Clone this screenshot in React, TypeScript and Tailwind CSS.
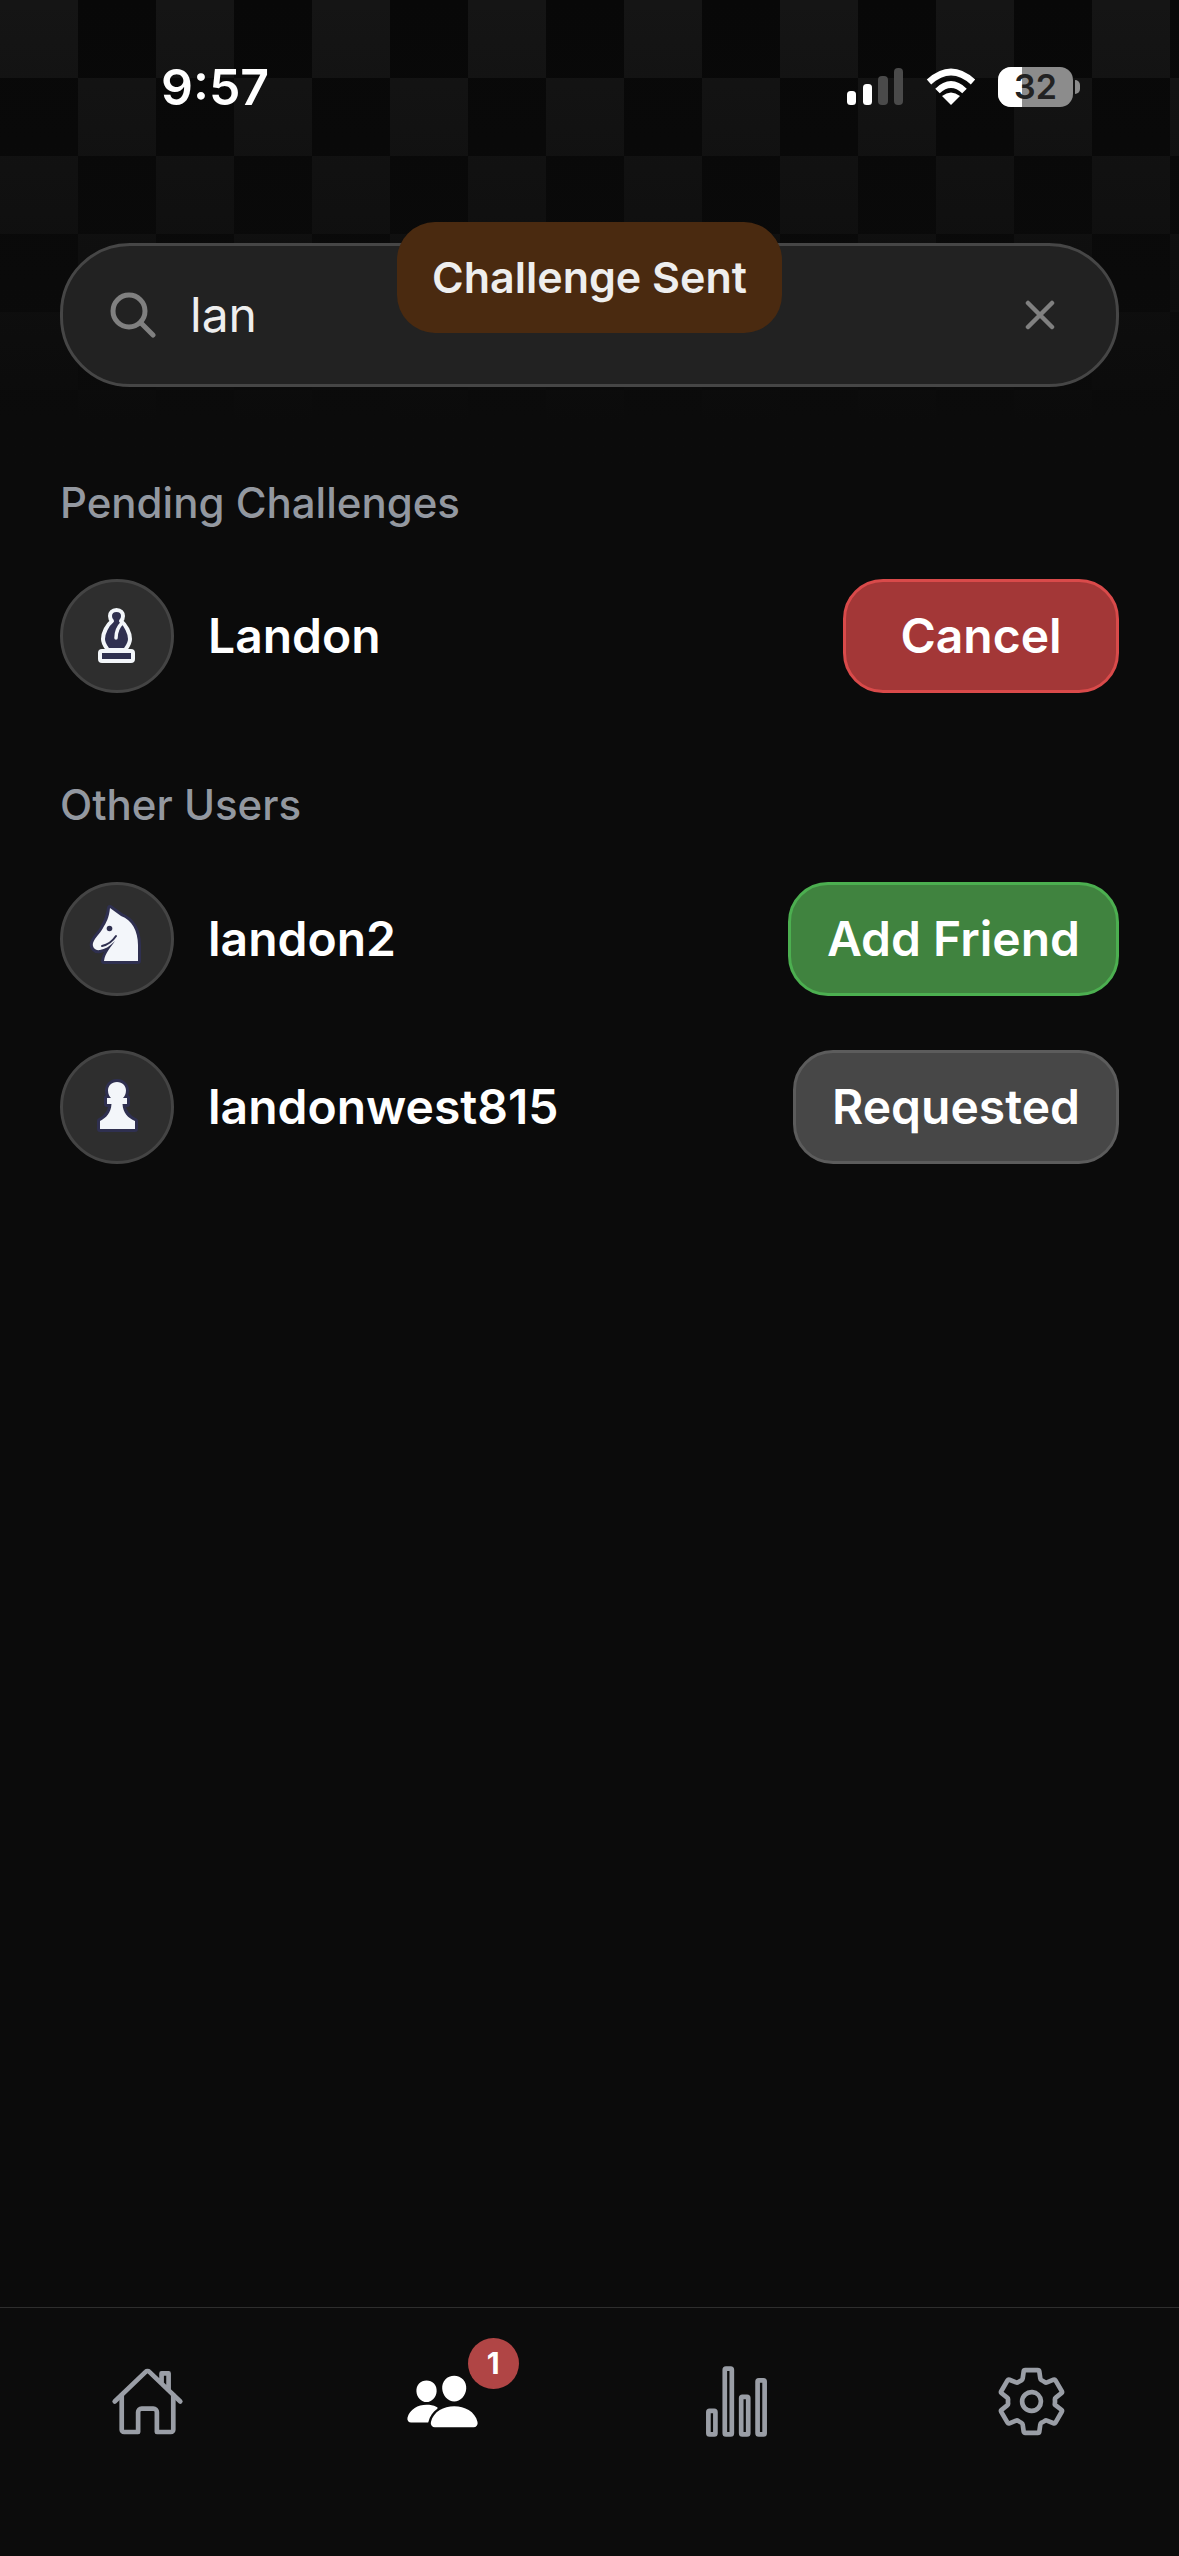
import React from "react";
import {
  IoHomeOutline,
  IoPeople,
  IoSettingsOutline,
  IoStatsChartOutline,
} from "react-icons/io5";

const BishopIcon = () => (
  <svg width="54" height="72" viewBox="0 0 54 72">
    <g fill="#2f3050" stroke="#f3f6fa" strokeWidth="4" strokeLinejoin="round">
      <path d="M26.500 10C31 10 33 13 33 16C33 18 32 20 31 21C36 25 40 33 40 39C40 44 37 47 35 50H18C16 47 13 44 13 39C13 33 17 25 22 21C21 20 20 18 20 16C20 13 22 10 26.500 10Z" />
      <rect x="10" y="51" width="33" height="10" rx="2" />
    </g>
    <path d="M32 23C29 26 26 31 26 38" fill="none" stroke="#f3f6fa" strokeWidth="3.500" strokeLinecap="round" />
  </svg>
);

const KnightIcon = () => (
  <svg width="64" height="72" viewBox="0 0 64 72">
    <path
      d="M25 5L36 13C47 17 53 28 53 42V58H19C20 50 26 44 30 38C24 44 20 46 15 47C10 48 7 44 8 40C10 34 15 31 18 25C21 20 24 15 25 5Z"
      fill="#f3f6fa"
      stroke="#2f3050"
      strokeWidth="6"
      strokeLinejoin="round"
      paintOrder="stroke"
    />
    <circle cx="24.500" cy="25.500" r="2.800" fill="#2f3050" />
    <path d="M31 33C27 39 22 42 17 43" fill="none" stroke="#2f3050" strokeWidth="2" strokeLinecap="round" />
  </svg>
);

const PawnIcon = () => (
  <svg width="64" height="72" viewBox="0 0 64 72">
    <path
      d="M32 11C26.500 11 23 15 23 19.500C23 23 24.500 25.500 26 27H22V33H26.500C26 42 21 47 15 50V58H50V50C43 47 38 42 37.500 33H42V27H38C39.500 25.500 41 23 41 19.500C41 15 37.500 11 32 11Z"
      fill="#f3f6fa"
      stroke="#2f3050"
      strokeWidth="6"
      strokeLinejoin="round"
      paintOrder="stroke"
    />
  </svg>
);

const SignalIcon = () => (
  <svg width="58" height="38" viewBox="0 0 58 38">
    <rect x="1" y="23" width="9" height="14" rx="3.500" fill="#fff" />
    <rect x="17" y="16" width="9" height="21" rx="3.500" fill="#fff" />
    <rect x="32" y="8" width="10" height="29" rx="4" fill="#4a4a4a" />
    <rect x="48" y="0" width="9" height="37" rx="4" fill="#4a4a4a" />
  </svg>
);

const WifiIcon = () => (
  <svg width="50" height="38" viewBox="0 0 50 38">
    <path d="M3 14Q25 -6 47 14" fill="none" stroke="#fff" strokeWidth="6.500" strokeLinecap="butt" />
    <path d="M11.500 23Q25 10 38.500 23" fill="none" stroke="#fff" strokeWidth="6.500" />
    <path d="M25 37L16 28Q25 21 34 28Z" fill="#fff" />
  </svg>
);

const Battery = () => (
  <div className="flex items-center gap-[2px]">
    <div className="relative h-[40px] w-[75px] overflow-hidden rounded-[13px] bg-[#8c8c8c]">
      <div className="absolute inset-y-0 left-0 w-[24px] bg-white" />
      <span className="absolute inset-0 flex items-center justify-center text-[34px] font-semibold leading-none text-[#222222]">
        32
      </span>
    </div>
    <div className="h-[14px] w-[5px] rounded-r-full bg-[#8c8c8c]" />
  </div>
);

const SectionLabel = ({ children }: { children: React.ReactNode }) => (
  <div className="text-[42px] font-medium leading-[48px] text-[#9398a0]">{children}</div>
);

const Avatar = ({ children }: { children: React.ReactNode }) => (
  <div className="flex h-[114px] w-[114px] shrink-0 items-center justify-center rounded-full border-[3px] border-[#444444] bg-[#2e2e2e]">
    {children}
  </div>
);

interface UserRowProps {
  name: string;
  icon: React.ReactNode;
  action: string;
  actionClass: string;
}

const UserRow = ({ name, icon, action, actionClass }: UserRowProps) => (
  <div className="flex items-center">
    <Avatar>{icon}</Avatar>
    <span className="ml-[34px] flex-1 text-[48px] font-semibold text-white">{name}</span>
    <button className={`flex h-[114px] min-w-[276px] items-center justify-center rounded-[40px] border-[3px] px-[36px] text-[48px] font-semibold text-white ${actionClass}`}>
      {action}
    </button>
  </div>
);

export default function App() {
  return (
    <div className="relative flex h-[2556px] w-[1179px] flex-col overflow-hidden bg-[#0b0b0b] font-['Inter',sans-serif]">
      {/* Checker background, fades out behind the search bar */}
      <div className="absolute inset-x-0 top-0 h-[470px] bg-[repeating-conic-gradient(#080808_0_25%,#151515_0_50%)] bg-[size:156px_156px]">
        <div className="h-full w-full bg-gradient-to-b from-transparent to-[#0b0b0b] to-90%" />
      </div>

      <div className="relative flex h-[243px] shrink-0 items-start justify-between pl-[161px] pr-[99px] pt-[59px]">
        <span className="text-[50px] font-semibold leading-[56px] text-white">9:57</span>
        <div className="flex items-center gap-[22px] pt-[8px]">
          <SignalIcon />
          <WifiIcon />
          <Battery />
        </div>
      </div>

      <div className="relative mx-[60px] flex h-[144px] shrink-0 items-center rounded-[70px] border-[3px] border-[#464646] bg-[#222222] pl-[47px] pr-[61px]">
        <svg width="46" height="46" viewBox="0 0 46 46" fill="none" stroke="#808080" strokeWidth="5" strokeLinecap="round">
          <circle cx="19" cy="19" r="16" />
          <path d="M31 31L43 43" />
        </svg>
        <span className="ml-[34px] flex-1 text-[48px] leading-none text-[#eeeeee]">lan</span>
        <svg width="30" height="30" viewBox="0 0 30 30" fill="none" stroke="#808080" strokeWidth="4.500" strokeLinecap="round">
          <path d="M3 3L27 27M27 3L3 27" />
        </svg>
      </div>

      {/* Toast */}
      <div className="absolute left-[397px] top-[222px] flex h-[111px] w-[385px] items-center justify-center rounded-[38px] bg-[#4a2a10] text-[43px] font-semibold text-[#eeeeee]">
        Challenge Sent
      </div>

      <div className="relative flex flex-col px-[60px]">
        <div className="mt-[92px]">
          <SectionLabel>Pending Challenges</SectionLabel>
        </div>
        <div className="mt-[52px]">
          <UserRow
            name="Landon"
            icon={<BishopIcon />}
            action="Cancel"
            actionClass="border-[#d94a4a] bg-[#a33737]"
          />
        </div>
        <div className="mt-[88px]">
          <SectionLabel>Other Users</SectionLabel>
        </div>
        <div className="mt-[53px] flex flex-col gap-[54px]">
          <UserRow
            name="landon2"
            icon={<KnightIcon />}
            action="Add Friend"
            actionClass="border-[#4caf50] bg-[#40833f]"
          />
          <UserRow
            name="landonwest815"
            icon={<PawnIcon />}
            action="Requested"
            actionClass="border-[#5c5c5c] bg-[#474747]"
          />
        </div>
      </div>

      <div className="relative mt-auto grid h-[249px] grid-cols-4 border-t border-[#2e2e2e] bg-[#0c0c0c] pt-[56px]">
        <div className="flex h-[75px] justify-center text-[#9a9ea6]">
          <IoHomeOutline size={75} />
        </div>
        <div className="flex h-[75px] justify-center text-white">
          <div className="relative">
            <IoPeople size={75} />
            <span className="absolute -right-[39px] -top-[26px] flex h-[51px] w-[51px] items-center justify-center rounded-full bg-[#b04545] text-[30px] font-bold text-white">
              1
            </span>
          </div>
        </div>
        <div className="flex h-[75px] justify-center text-[#9a9ea6]">
          <IoStatsChartOutline size={75} />
        </div>
        <div className="flex h-[75px] justify-center text-[#9a9ea6]">
          <IoSettingsOutline size={75} />
        </div>
      </div>
    </div>
  );
}
